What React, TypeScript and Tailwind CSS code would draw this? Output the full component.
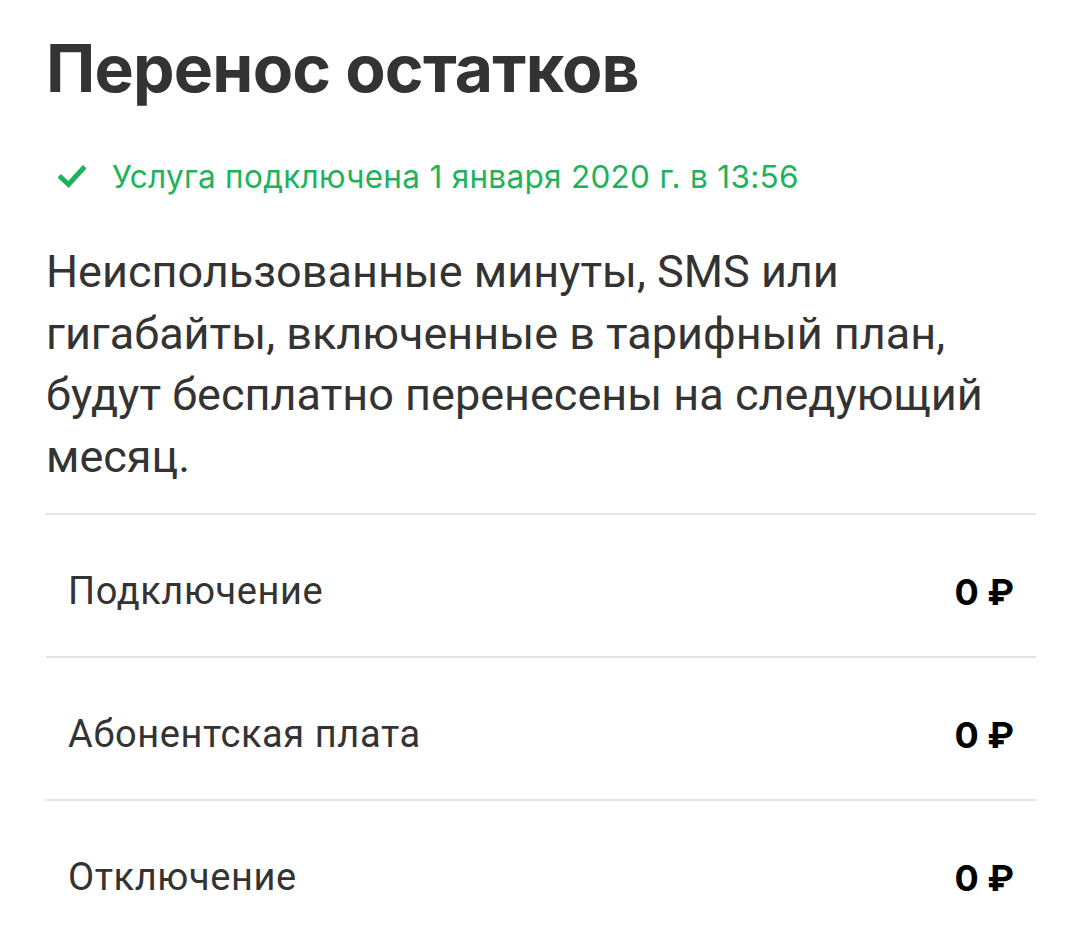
import React from "react";

const rows = [
  { label: "Подключение", price: "0 ₽" },
  { label: "Абонентская плата", price: "0 ₽" },
  { label: "Отключение", price: "0 ₽" },
];

function Check() {
  return (
    <svg width="28" height="24" viewBox="0 0 28 24" className="shrink-0">
      <path d="M3 12.5 L10.5 19.5 L25 3.5" fill="none" stroke="#1db35a" strokeWidth="5" strokeLinecap="square" />
    </svg>
  );
}

export default function App() {
  return (
    <div className="min-h-screen bg-white pl-[46px] pr-[44px] pt-[28px] text-[#333333]" style={{ fontFamily: "Roboto, sans-serif" }}>
      <h1 className="text-[66px] font-bold leading-[80px] tracking-[-0.8px] text-[#333333]" style={{ fontFamily: "Inter, sans-serif" }}>
        Перенос остатков
      </h1>

      <div className="mt-[49px] flex items-center gap-[26px] pl-[12px] text-[31.5px] leading-[40px] tracking-[0.3px] text-[#1db35a]" style={{ fontFamily: "Inter, sans-serif" }}>
        <Check />
        <span>Услуга подключена 1 января 2020 г. в 13:56</span>
      </div>

      <p className="mt-[44px] text-[45px] leading-[61.5px] text-[#333333]">
        Неиспользованные минуты, SMS или гигабайты, включенные в тарифный план, будут бесплатно перенесены на следующий месяц.
      </p>

      <div className="mt-[26px] flex flex-col">
        {rows.map((r) => (
          <div key={r.label} className="flex h-[143px] items-center justify-between border-t-2 border-[#e4e4e4] pl-[22px] pr-[22px] pt-[12px]">
            <span className="text-[38px] tracking-[0.6px] text-[#333333]">{r.label}</span>
            <span className="text-[36px] font-bold text-black" style={{ fontFamily: "Inter, sans-serif" }}>{r.price}</span>
          </div>
        ))}
      </div>
    </div>
  );
}
